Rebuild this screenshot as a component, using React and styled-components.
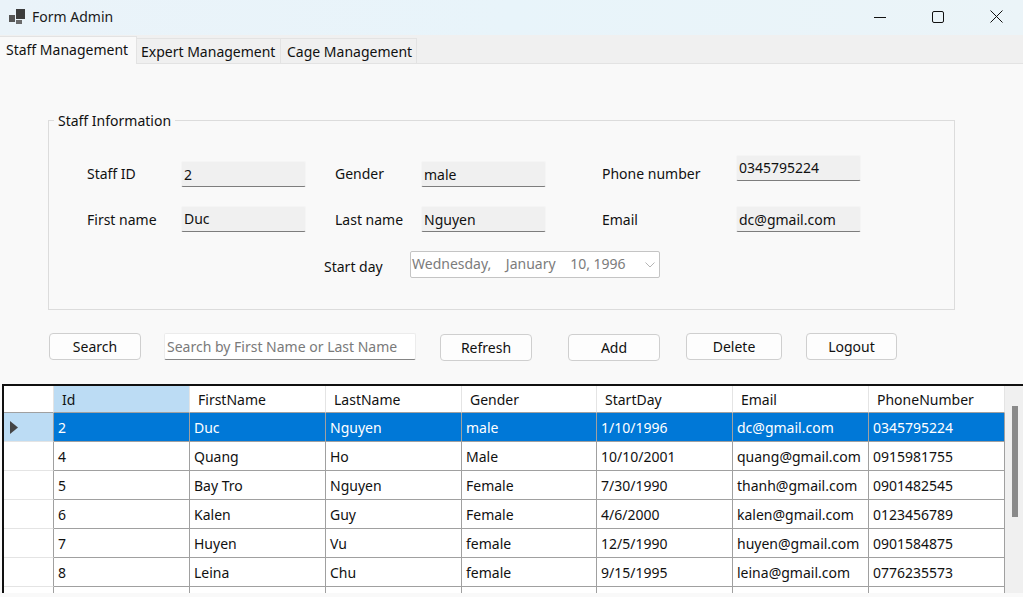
import React from 'react';
import styled, { createGlobalStyle } from 'styled-components';

const GlobalStyle = createGlobalStyle`
  html, body { margin: 0; padding: 0; height: 100%; overflow: hidden; }
  body { font-family: "Noto Sans", "Open Sans", sans-serif; font-size: 14px; color: #111; background: #f9f9f9; }
`;

const Window = styled.div`
  width: 1023px;
  height: 597px;
  display: flex;
  flex-direction: column;
  overflow: hidden;
  background: #f9f9f9;
`;

const TitleBar = styled.div`
  box-sizing: border-box;
  height: 35px;
  flex: none;
  display: flex;
  align-items: center;
  padding: 0 0 2px 9px;
  background: linear-gradient(90deg, #eaf3f9, #e8f4fa 50%, #ebf4f8);
`;

const TitleText = styled.span`
  margin-left: 7px;
  font-size: 14px;
  color: #1a1a1a;
`;

const WindowButtons = styled.div`
  margin-left: auto;
  margin-right: -3px;
  display: flex;
`;

const WindowButton = styled.div`
  width: 58.5px;
  height: 33px;
  display: flex;
  align-items: center;
  justify-content: center;
`;

const TabStrip = styled.div`
  height: 28px;
  flex: none;
  display: flex;
  align-items: flex-end;
  background: #f0f0f0;
  border-bottom: 1px solid #e3e3e3;
`;

const Tab = styled.div`
  box-sizing: border-box;
  width: ${p => p.$width}px;
  height: ${p => (p.$active ? 28 : 25)}px;
  margin-bottom: ${p => (p.$active ? -1 : 0)}px;
  padding-top: 3px;
  padding-left: ${p => p.$inset}px;
  background: ${p => (p.$active ? '#f9f9f9' : '#f0f0f0')};
  border: 1px solid #e3e3e3;
  border-width: 1px 1px 0 0;
  white-space: nowrap;
`;

const Body = styled.div`
  flex: 1;
  display: flex;
  flex-direction: column;
  min-height: 0;
`;

const Group = styled.fieldset`
  box-sizing: border-box;
  width: 907px;
  height: 200px;
  margin: 46px 0 0 48px;
  padding: 0 0 0 38px;
  border: 1px solid #dcdcdc;
  min-width: 0;
`;

const GroupTitle = styled.legend`
  margin-left: -33px;
  padding: 1px 4px 0;
  line-height: 20px;
`;

const FieldGrid = styled.div`
  display: grid;
  grid-template-columns: 95px 124px 29px 87px 124px 56px 135px 124px;
  grid-auto-rows: 27px;
  row-gap: 18px;
  margin-top: 30px;
`;

const Label = styled.div`
  grid-column: ${p => p.$col};
  padding-top: ${p => p.$drop}px;
  line-height: 24px;
  white-space: nowrap;
`;

const Field = styled.div`
  grid-column: ${p => p.$col};
  box-sizing: border-box;
  height: 26px;
  margin-left: -1px;
  margin-top: ${p => (p.$lift ? -6 : 0)}px;
  padding: ${p => p.$pad ?? 3}px 0 0 2px;
  line-height: 20px;
  background: #f0f0f0;
  border: 1px solid #f5f5f5;
  border-bottom: 1px solid #7d7d7d;
  border-radius: 2px;
  white-space: nowrap;
`;

const StartRow = styled.div`
  display: flex;
  margin: 18px 0 0 237px;
`;

const StartLabel = styled.div`
  width: 86px;
  padding-top: 4px;
  line-height: 24px;
`;

const DatePicker = styled.div`
  box-sizing: border-box;
  width: 250px;
  height: 27px;
  display: flex;
  align-items: center;
  padding: 0 0 2px 1px;
  background: #fff;
  border: 1px solid #c4c4c4;
  border-radius: 2px;
  color: #7c7c7c;
  white-space: pre;
`;

const ChevronBox = styled.span`
  margin-left: auto;
  margin-right: 4px;
  padding-top: 2px;
  display: flex;
`;

const Toolbar = styled.div`
  display: flex;
  align-items: flex-start;
  margin: 23px 0 0 49px;
  height: 28px;
`;

const ActionButton = styled.button`
  box-sizing: border-box;
  width: ${p => p.$width}px;
  height: 27px;
  margin-left: ${p => p.$gap ?? 0}px;
  margin-top: ${p => p.$drop ?? 0}px;
  padding: 0;
  font: inherit;
  color: #111;
  background: #fdfdfd;
  border: 1px solid #cfcfcf;
  border-radius: 4px;
`;

const SearchInput = styled.div`
  box-sizing: border-box;
  width: 252px;
  height: 27px;
  margin-left: 23px;
  padding: 3px 0 0 2px;
  line-height: 20px;
  background: #fff;
  border: 1px solid #ececec;
  border-bottom: 1px solid #858585;
  border-radius: 2px;
  color: #7a7a7a;
  white-space: nowrap;
`;

const GridFrame = styled.div`
  flex: 1;
  min-height: 0;
  margin: 23px 0 4px 2px;
  display: flex;
  overflow: hidden;
  background: #f0f0f0;
  border-top: 2px solid #101010;
  border-left: 2px solid #101010;
`;

const Sheet = styled.div`
  width: 1001px;
  flex: none;
  display: grid;
  grid-template-columns: 50px 136px 136px 136px 135px 136px 136px 136px;
  grid-template-rows: 27px repeat(7, 29px);
  background: #fff;
`;

const HeadCell = styled.div`
  box-sizing: border-box;
  padding: 3px 0 0 8px;
  line-height: 22px;
  background: ${p => (p.$current ? '#bcdcf4' : '#fff')};
  border-right: 1px solid #e4e4e4;
  border-bottom: 1px solid #a0a0a0;
`;

const RowHead = styled.div`
  box-sizing: border-box;
  display: flex;
  align-items: center;
  padding-left: 6px;
  background: ${p => (p.$current ? '#bcdcf4' : '#fff')};
  border-right: 1px solid #a0a0a0;
  border-bottom: 1px solid #e4e4e4;
`;

const Cell = styled.div`
  box-sizing: border-box;
  padding: 4px 0 0 4px;
  line-height: 22px;
  white-space: nowrap;
  overflow: hidden;
  color: ${p => (p.$selected ? '#fff' : '#111')};
  background: ${p => (p.$selected ? '#0078d7' : '#fff')};
  border-right: 1px solid #a0a0a0;
  border-bottom: 1px solid #a0a0a0;
`;

const ScrollTrack = styled.div`
  flex: 1;
  display: flex;
  justify-content: center;
  padding: 20px 0 0 2px;
`;

const ScrollThumb = styled.div`
  width: 6px;
  height: 111px;
  background: #8a8a8a;
`;

const columns = ['Id', 'FirstName', 'LastName', 'Gender', 'StartDay', 'Email', 'PhoneNumber'];

const rows = [
  ['2', 'Duc', 'Nguyen', 'male', '1/10/1996', 'dc@gmail.com', '0345795224'],
  ['4', 'Quang', 'Ho', 'Male', '10/10/2001', 'quang@gmail.com', '0915981755'],
  ['5', 'Bay Tro', 'Nguyen', 'Female', '7/30/1990', 'thanh@gmail.com', '0901482545'],
  ['6', 'Kalen', 'Guy', 'Female', '4/6/2000', 'kalen@gmail.com', '0123456789'],
  ['7', 'Huyen', 'Vu', 'female', '12/5/1990', 'huyen@gmail.com', '0901584875'],
  ['8', 'Leina', 'Chu', 'female', '9/15/1995', 'leina@gmail.com', '0776235573'],
  ['', '', '', '', '', '', ''],
];

const AppIcon = () => (
  <svg width="16" height="16" viewBox="0 0 16 16">
    <rect x="7" y="0" width="9" height="10" fill="#3c3c3c" />
    <rect x="0" y="6" width="6" height="7" fill="#555" />
    <rect x="7" y="11" width="6" height="4" fill="#6a6a6a" />
  </svg>
);

const App = () => (
  <Window>
    <GlobalStyle />
    <TitleBar>
      <AppIcon />
      <TitleText>Form Admin</TitleText>
      <WindowButtons>
        <WindowButton>
          <svg width="12" height="12" viewBox="0 0 12 12"><path d="M0 6.5h12" stroke="#111" strokeWidth="1" /></svg>
        </WindowButton>
        <WindowButton>
          <svg width="12" height="12" viewBox="0 0 12 12"><rect x=".5" y=".5" width="11" height="11" rx="1.5" fill="none" stroke="#111" /></svg>
        </WindowButton>
        <WindowButton>
          <svg width="13" height="13" viewBox="0 0 13 13"><path d="M.5.5l12 12M12.5.5l-12 12" stroke="#111" /></svg>
        </WindowButton>
      </WindowButtons>
    </TitleBar>
    <TabStrip>
      <Tab $active $width={137} $inset={6}>Staff Management</Tab>
      <Tab $width={144} $inset={4}>Expert Management</Tab>
      <Tab $width={136} $inset={6}>Cage Management</Tab>
    </TabStrip>
    <Body>
      <Group>
        <GroupTitle>Staff Information</GroupTitle>
        <FieldGrid>
          <Label $col={1} $drop={1}>Staff ID</Label>
          <Field $col={2}>2</Field>
          <Label $col={4} $drop={1}>Gender</Label>
          <Field $col={5}>male</Field>
          <Label $col={7} $drop={1}>Phone number</Label>
          <Field $col={8} $lift $pad={2}>0345795224</Field>
          <Label $col={1} $drop={2}>First name</Label>
          <Field $col={2} $pad={2}>Duc</Field>
          <Label $col={4} $drop={2}>Last name</Label>
          <Field $col={5}>Nguyen</Field>
          <Label $col={7} $drop={2}>Email</Label>
          <Field $col={8}>dc@gmail.com</Field>
        </FieldGrid>
        <StartRow>
          <StartLabel>Start day</StartLabel>
          <DatePicker>
            {'Wednesday,    January    10, 1996'}
            <ChevronBox>
              <svg width="10" height="6" viewBox="0 0 10 6"><path d="M.5.5L5 5 9.5.5" fill="none" stroke="#b5b5b5" /></svg>
            </ChevronBox>
          </DatePicker>
        </StartRow>
      </Group>
      <Toolbar>
        <ActionButton $width={92}>Search</ActionButton>
        <SearchInput>Search by First Name or Last Name</SearchInput>
        <ActionButton $width={92} $gap={24} $drop={1}>Refresh</ActionButton>
        <ActionButton $width={92} $gap={36} $drop={1}>Add</ActionButton>
        <ActionButton $width={96} $gap={26}>Delete</ActionButton>
        <ActionButton $width={91} $gap={24}>Logout</ActionButton>
      </Toolbar>
      <GridFrame>
        <Sheet>
          <HeadCell />
          {columns.map((name, i) => (
            <HeadCell key={name} $current={i === 0}>{name}</HeadCell>
          ))}
          {rows.map((row, r) => (
            <React.Fragment key={r}>
              <RowHead $current={r === 0}>
                {r === 0 && (
                  <svg width="8" height="13" viewBox="0 0 8 13"><path d="M0 0l8 6.5L0 13z" fill="#444" /></svg>
                )}
              </RowHead>
              {row.map((value, c) => (
                <Cell key={c} $selected={r === 0}>{value}</Cell>
              ))}
            </React.Fragment>
          ))}
        </Sheet>
        <ScrollTrack>
          <ScrollThumb />
        </ScrollTrack>
      </GridFrame>
    </Body>
  </Window>
);

export default App;
